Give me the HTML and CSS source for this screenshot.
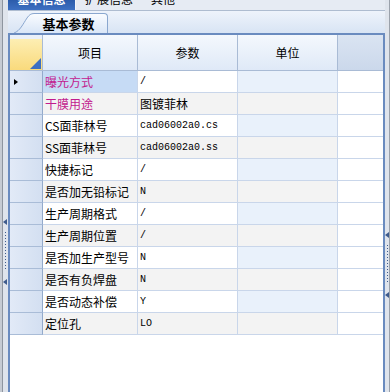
FILE: index.html
```html
<!DOCTYPE html>
<html lang="zh-CN">
<head>
    <meta charset="UTF-8">
    <meta name="viewport" content="width=device-width, initial-scale=1.0">
    <title>基本参数</title>
    <link rel="stylesheet" href="styles.css">
</head>
<body>
    <div class="frame">
        <div class="split split-left">
            <span class="arrow"></span>
            <span class="dots"></span>
            <span class="arrow"></span>
        </div>

        <div class="main">
            <div class="pagetabs">
                <span class="ptab active"><span>基本信息</span></span>
                <span class="ptab"><span>扩展信息</span></span>
                <span class="ptab"><span>其他</span></span>
            </div>

            <div class="subtabs">
                <div class="subtab">
                    <svg class="slant" width="20" height="20" viewBox="0 0 20 20">
                        <defs>
                            <linearGradient id="tabfill" x1="0" y1="0" x2="0" y2="1">
                                <stop offset="0" stop-color="#fafcff"/>
                                <stop offset="1" stop-color="#d9e6f7"/>
                            </linearGradient>
                        </defs>
                        <path d="M0 20 C6 18 9 11 13 5 C15 2 17 0.5 20 0.5 L20 20 Z" fill="url(#tabfill)"/>
                        <path d="M0 20 C6 18 9 11 13 5 C15 2 17 0.5 20 0.5" fill="none" stroke="#8aa7cf" stroke-width="1"/>
                    </svg>
                    <div class="subtab-body">基本参数</div>
                </div>
            </div>

            <div class="grid">
                <div class="row head">
                    <div class="cell rh corner"><span class="corner-tri"></span></div>
                    <div class="cell c-name">项目</div>
                    <div class="cell c-val">参数</div>
                    <div class="cell c-unit">单位</div>
                    <div class="cell c-fill"></div>
                </div>

                <div class="row">
                    <div class="cell rh"><span class="pointer"></span></div>
                    <div class="cell c-name key selected">曝光方式</div>
                    <div class="cell c-val mono">/</div>
                    <div class="cell c-unit"></div>
                    <div class="cell c-fill"></div>
                </div>
                <div class="row alt">
                    <div class="cell rh"></div>
                    <div class="cell c-name key">干膜用途</div>
                    <div class="cell c-val">图镀菲林</div>
                    <div class="cell c-unit"></div>
                    <div class="cell c-fill"></div>
                </div>
                <div class="row">
                    <div class="cell rh"></div>
                    <div class="cell c-name">CS面菲林号</div>
                    <div class="cell c-val mono">cad06002a0.cs</div>
                    <div class="cell c-unit"></div>
                    <div class="cell c-fill"></div>
                </div>
                <div class="row alt">
                    <div class="cell rh"></div>
                    <div class="cell c-name">SS面菲林号</div>
                    <div class="cell c-val mono">cad06002a0.ss</div>
                    <div class="cell c-unit"></div>
                    <div class="cell c-fill"></div>
                </div>
                <div class="row">
                    <div class="cell rh"></div>
                    <div class="cell c-name">快捷标记</div>
                    <div class="cell c-val mono">/</div>
                    <div class="cell c-unit"></div>
                    <div class="cell c-fill"></div>
                </div>
                <div class="row alt">
                    <div class="cell rh"></div>
                    <div class="cell c-name">是否加无铅标记</div>
                    <div class="cell c-val mono">N</div>
                    <div class="cell c-unit"></div>
                    <div class="cell c-fill"></div>
                </div>
                <div class="row">
                    <div class="cell rh"></div>
                    <div class="cell c-name">生产周期格式</div>
                    <div class="cell c-val mono">/</div>
                    <div class="cell c-unit"></div>
                    <div class="cell c-fill"></div>
                </div>
                <div class="row alt">
                    <div class="cell rh"></div>
                    <div class="cell c-name">生产周期位置</div>
                    <div class="cell c-val mono">/</div>
                    <div class="cell c-unit"></div>
                    <div class="cell c-fill"></div>
                </div>
                <div class="row">
                    <div class="cell rh"></div>
                    <div class="cell c-name">是否加生产型号</div>
                    <div class="cell c-val mono">N</div>
                    <div class="cell c-unit"></div>
                    <div class="cell c-fill"></div>
                </div>
                <div class="row alt">
                    <div class="cell rh"></div>
                    <div class="cell c-name">是否有负焊盘</div>
                    <div class="cell c-val mono">N</div>
                    <div class="cell c-unit"></div>
                    <div class="cell c-fill"></div>
                </div>
                <div class="row">
                    <div class="cell rh"></div>
                    <div class="cell c-name">是否动态补偿</div>
                    <div class="cell c-val mono">Y</div>
                    <div class="cell c-unit"></div>
                    <div class="cell c-fill"></div>
                </div>
                <div class="row alt">
                    <div class="cell rh"></div>
                    <div class="cell c-name">定位孔</div>
                    <div class="cell c-val mono">LO</div>
                    <div class="cell c-unit"></div>
                    <div class="cell c-fill"></div>
                </div>
            </div>
        </div>

        <div class="split split-right">
            <span class="arrow"></span>
            <span class="dots"></span>
            <span class="arrow"></span>
        </div>
    </div>
</body>
</html>
```

FILE: styles.css
```css
* { box-sizing: border-box; }

body {
    margin: 0;
    font-family: "Noto Sans CJK SC", "DejaVu Sans", sans-serif;
    font-size: 12px;
    color: #000;
    background: #fff;
}

.frame {
    display: flex;
    width: 390px;
    height: 392px;
    overflow: hidden;
}

/* splitters on both sides */
.split {
    display: flex;
    flex-direction: column;
    align-items: center;
    background: #dfe4ec;
}
.split-left {
    width: 8px;
    border-left: 2px solid #c6cbd3;
    box-shadow: inset 1px 0 #8e959f;
    padding-top: 219px;
}
.split-right {
    width: 5px;
    border-right: 1px solid #9aa1ab;
    padding-top: 232px;
}
.arrow {
    width: 0;
    height: 0;
    border-right: 4px solid #3e5b8c;
    border-top: 3.5px solid transparent;
    border-bottom: 3.5px solid transparent;
}
.dots {
    width: 1px;
    height: 38px;
    margin: 7px 0 9px;
    background: repeating-linear-gradient(#3e5b8c 0 1px, transparent 1px 3px);
}

.main {
    width: 377px;
    display: flex;
    flex-direction: column;
}

/* top page tabs (scrolled, only bottom visible) */
.pagetabs {
    height: 10px;
    display: flex;
    overflow: hidden;
    background: #e6ebf3;
}
.ptab {
    height: 10px;
    padding: 0 9px;
    overflow: hidden;
    white-space: nowrap;
}
.ptab span {
    display: block;
    margin-top: -7px;
    line-height: 12px;
    font-size: 12px;
}
.ptab.active {
    width: 68px;
    text-align: center;
    color: #fff;
    font-weight: bold;
    background: linear-gradient(#2c5cab, #3d70c2);
    border-right: 1px solid #f4f6fa;
}

/* sub tab band */
.subtabs {
    height: 23px;
    padding: 2px 0 0 6px;
    border-top: 1px solid #aebcd0;
    background: linear-gradient(#eef3fb, #d8e4f4);
    display: flex;
}
.subtab {
    display: flex;
    height: 20px;
}
.slant { display: block; }
.subtab-body {
    width: 74px;
    height: 20px;
    line-height: 19px;
    padding-right: 4px;
    text-align: center;
    font-size: 13px;
    font-weight: bold;
    border-top: 1px solid #8aa7cf;
    border-right: 1px solid #8aa7cf;
    border-top-right-radius: 4px;
    background: linear-gradient(#fafcff, #d9e6f7);
}

/* data grid */
.grid {
    flex: 1;
    background: #fff;
    border: 2px solid #6a8bbf;
    border-bottom: none;
}
.row {
    display: flex;
    height: 22px;
}
.cell {
    height: 100%;
    border-right: 1px solid #c9d6ea;
    border-bottom: 1px solid #c9d6ea;
    padding-left: 2px;
    line-height: 21px;
    white-space: nowrap;
    overflow: hidden;
}
.rh {
    width: 33px;
    display: flex;
    align-items: center;
    padding-left: 4px;
    background: linear-gradient(to right, #e2eaf7, #d3dff1);
    border-right-color: #93aacb;
    border-bottom-color: #a9bcd7;
}
.c-name { width: 95px; }
.c-val { width: 100px; }
.c-unit { width: 100px; background: #e9f1fb; }
.c-fill { flex: 1; border-right: none; }

.row.alt .c-name,
.row.alt .c-val,
.row.alt .c-unit { background: #f3f3f3; }

.key { color: #c21a8e; }
.selected { background: #c6dbf5; }
.mono {
    font-family: "Liberation Mono", monospace;
    font-size: 10px;
}

.pointer {
    width: 0;
    height: 0;
    border-left: 4px solid #000;
    border-top: 3.5px solid transparent;
    border-bottom: 3.5px solid transparent;
}

.row.head { height: 36px; }
.head .cell {
    line-height: 36px;
    text-align: center;
    padding-left: 0;
    background: linear-gradient(#f4f8fd, #dfe9f7);
    border-right-color: #a9bbd5;
    border-bottom-color: #a9bbd5;
}
.head .c-fill { background: linear-gradient(#dae4f2, #cbd8eb); }
.head .corner {
    display: flex;
    align-items: flex-end;
    justify-content: flex-end;
    padding: 0 1px 1px 0;
    background: linear-gradient(#eaf0f9 0 4px, #fdeeb3 4px, #f9da7c);
}
.corner-tri {
    width: 0;
    height: 0;
    border-bottom: 11px solid #3c6ec2;
    border-left: 11px solid transparent;
}
```
